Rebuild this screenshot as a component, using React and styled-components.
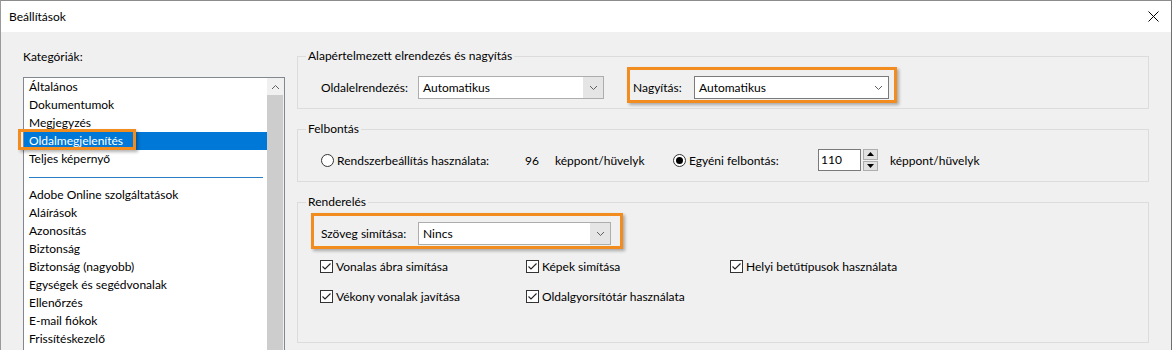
import React from "react";
import styled, { createGlobalStyle } from "styled-components";

const GlobalStyle = createGlobalStyle`
  html, body {
    margin: 0;
    padding: 0;
    background: #ffffff;
  }
  body {
    font-family: "Segoe UI", Lato, "Noto Sans", sans-serif;
    font-size: 12px;
    color: #000000;
  }
`;

const Window = styled.div`
  width: 1172px;
  height: 350px;
  box-sizing: border-box;
  border-top: 1px solid #8c8c8c;
  border-left: 1px solid #9a9a9a;
  border-right: 1px solid #6f6f6f;
  background: #f0f0f0;
  display: flex;
  flex-direction: column;
  overflow: hidden;
`;

const TitleBar = styled.div`
  height: 31px;
  flex: none;
  background: #ffffff;
  display: flex;
  align-items: center;
  justify-content: space-between;
  padding: 0 12px 0 8px;
`;

const Body = styled.div`
  flex: 1;
  display: flex;
  min-height: 0;
`;

const LeftPane = styled.div`
  width: 262px;
  padding: 17px 0 0 22px;
  flex: none;
`;

const PaneLabel = styled.div`
  line-height: 16px;
  margin-bottom: 12px;
`;

const ListBox = styled.div`
  width: 262px;
  height: 290px;
  box-sizing: border-box;
  border: 1px solid #828790;
  background: #ffffff;
  display: flex;
`;

const Items = styled.div`
  flex: 1;
`;

const Item = styled.div`
  height: 18px;
  line-height: 18px;
  padding-left: 5px;
  white-space: nowrap;
  background: ${(p) => (p.$selected ? "#0078d7" : "transparent")};
  color: ${(p) => (p.$selected ? "#ffffff" : "#000000")};
`;

const Marked = styled.span`
  position: relative;
  &::before {
    content: "";
    position: absolute;
    left: -11px;
    right: -13px;
    top: -4px;
    bottom: -2px;
    border: 3px solid #f28c1f;
    box-shadow: 2px 2px 3px rgba(0, 0, 0, 0.3);
  }
`;

const Separator = styled.div`
  height: 18px;
  display: flex;
  align-items: center;
  padding: 0 4px 0 5px;
  &::after {
    content: "";
    flex: 1;
    height: 1px;
    background: #2a7fc4;
  }
`;

const ScrollBar = styled.div`
  width: 17px;
  flex: none;
  background: #f0f0f0;
  display: flex;
  flex-direction: column;
`;

const ScrollArrow = styled.div`
  height: 17px;
  display: flex;
  align-items: center;
  justify-content: center;
`;

const ScrollThumb = styled.div`
  flex: 1;
  margin: 0 1px 0 0;
  background: #cdcdcd;
`;

const RightPane = styled.div`
  width: 852px;
  margin-left: 12px;
  padding-top: 24px;
  display: flex;
  flex-direction: column;
  gap: 20px;
`;

const Group = styled.div`
  position: relative;
  height: ${(p) => p.$h}px;
  box-sizing: border-box;
  border: 1px solid #dcdcdc;
  padding: 19px 0 0 23px;
`;

const Caption = styled.span`
  position: absolute;
  top: -9px;
  left: 8px;
  padding: 0 2px;
  line-height: 16px;
  background: #f0f0f0;
`;

const Row = styled.div`
  display: flex;
  align-items: center;
`;

const FieldLabel = styled.span`
  width: ${(p) => p.$w}px;
  flex: none;
  white-space: nowrap;
`;

const ComboBox = styled.div`
  width: ${(p) => p.$w}px;
  height: 23px;
  box-sizing: border-box;
  border: 1px solid ${(p) => (p.$button ? "#adadad" : "#7a7a7a")};
  background: #ffffff;
  display: flex;
  align-items: stretch;
  flex: none;
`;

const ComboText = styled.span`
  flex: 1;
  padding-left: 4px;
  line-height: 21px;
`;

const ComboButton = styled.span`
  width: 20px;
  display: flex;
  align-items: center;
  justify-content: center;
  background: ${(p) => (p.$button ? "#e5e5e5" : "#ffffff")};
`;

const Highlight = styled.div`
  display: flex;
  align-items: center;
  flex: none;
  border: 3px solid #f28c1f;
  box-shadow: 2px 2px 3px rgba(0, 0, 0, 0.3);
  margin: -9px 0 -4px ${(p) => p.$ml}px;
  padding: 6px ${(p) => p.$pr}px 1px ${(p) => p.$pl}px;
`;

const ResolutionRow = styled.div`
  display: grid;
  grid-template-columns: 204px 30px 118px 145px 72px auto;
  align-items: center;
  height: 22px;
`;

const Option = styled.label`
  display: inline-flex;
  align-items: center;
  gap: 3px;
  white-space: nowrap;
`;

const Spin = styled.div`
  display: flex;
  gap: 2px;
`;

const SpinInput = styled.div`
  width: 43px;
  height: 22px;
  box-sizing: border-box;
  border: 1px solid #7a7a7a;
  background: #ffffff;
  padding-left: 2px;
  line-height: 19px;
`;

const SpinButtons = styled.div`
  width: 15px;
  display: flex;
  flex-direction: column;
  gap: 1px;
`;

const SpinButton = styled.div`
  flex: 1;
  background: #e1e1e1;
  border: 1px solid #adadad;
  display: flex;
  align-items: center;
  justify-content: center;
`;

const CheckGrid = styled.div`
  display: grid;
  grid-template-columns: 206px 204px auto;
  grid-auto-rows: 18px;
  row-gap: 12px;
  margin: 12px 0 0 -1px;
`;

const Check = styled.label`
  display: inline-flex;
  align-items: center;
  gap: 3px;
  white-space: nowrap;
  grid-column: ${(p) => p.$col};
`;

const Chevron = ({ up }) => (
  <svg width="9" height="6" viewBox="0 0 9 6">
    <polyline
      points={up ? "1,5 4.5,1.5 8,5" : "1,1 4.5,4.5 8,1"}
      fill="none"
      stroke="#606060"
      strokeWidth="1"
    />
  </svg>
);

const CloseIcon = () => (
  <svg width="11" height="11" viewBox="0 0 11 11">
    <path d="M0.5 0.5 L10.5 10.5 M10.5 0.5 L0.5 10.5" stroke="#000" strokeWidth="1" />
  </svg>
);

const Radio = ({ checked }) => (
  <svg width="13" height="13" viewBox="0 0 13 13">
    <circle cx="6.5" cy="6.5" r="6" fill="#fff" stroke="#333" strokeWidth="1" />
    {checked && <circle cx="6.5" cy="6.5" r="3.5" fill="#000" />}
  </svg>
);

const CheckBox = () => (
  <svg width="13" height="13" viewBox="0 0 13 13">
    <rect x="0.5" y="0.5" width="12" height="12" fill="#fff" stroke="#333" />
    <polyline points="2.5,6.5 5,9 10.5,3.5" fill="none" stroke="#222" strokeWidth="1.1" />
  </svg>
);

const Triangle = ({ up }) => (
  <svg width="7" height="4" viewBox="0 0 7 4">
    <polygon points={up ? "0,4 3.5,0 7,4" : "0,0 3.5,4 7,0"} fill="#000" />
  </svg>
);

const topItems = ["Általános", "Dokumentumok", "Megjegyzés"];
const otherItems = [
  "Adobe Online szolgáltatások",
  "Aláírások",
  "Azonosítás",
  "Biztonság",
  "Biztonság (nagyobb)",
  "Egységek és segédvonalak",
  "Ellenőrzés",
  "E-mail fiókok",
  "Frissítéskezelő",
];

const Combo = ({ w, value, button }) => (
  <ComboBox $w={w} $button={button}>
    <ComboText>{value}</ComboText>
    <ComboButton $button={button}>
      <Chevron />
    </ComboButton>
  </ComboBox>
);

export default function App() {
  return (
    <>
      <GlobalStyle />
      <Window>
        <TitleBar>
          <span>Beállítások</span>
          <CloseIcon />
        </TitleBar>
        <Body>
          <LeftPane>
            <PaneLabel>Kategóriák:</PaneLabel>
            <ListBox>
              <Items>
                {topItems.map((t) => (
                  <Item key={t}>{t}</Item>
                ))}
                <Item $selected>
                  <Marked>Oldalmegjelenítés</Marked>
                </Item>
                <Item>Teljes képernyő</Item>
                <Separator />
                {otherItems.map((t) => (
                  <Item key={t}>{t}</Item>
                ))}
              </Items>
              <ScrollBar>
                <ScrollArrow>
                  <Chevron up />
                </ScrollArrow>
                <ScrollThumb />
              </ScrollBar>
            </ListBox>
          </LeftPane>

          <RightPane>
            <Group $h={53}>
              <Caption>Alapértelmezett elrendezés és nagyítás</Caption>
              <Row>
                <FieldLabel $w={97}>Oldalelrendezés:</FieldLabel>
                <Combo w={186} value="Automatikus" button />
                <Highlight $ml={23} $pl={3} $pr={5}>
                  <FieldLabel $w={61}>Nagyítás:</FieldLabel>
                  <Combo w={195} value="Automatikus" />
                </Highlight>
              </Row>
            </Group>

            <Group $h={53}>
              <Caption>Felbontás</Caption>
              <ResolutionRow>
                <Option>
                  <Radio />
                  Rendszerbeállítás használata:
                </Option>
                <span>96</span>
                <span>képpont/hüvelyk</span>
                <Option>
                  <Radio checked />
                  Egyéni felbontás:
                </Option>
                <Spin>
                  <SpinInput>110</SpinInput>
                  <SpinButtons>
                    <SpinButton>
                      <Triangle up />
                    </SpinButton>
                    <SpinButton>
                      <Triangle />
                    </SpinButton>
                  </SpinButtons>
                </Spin>
                <span>képpont/hüvelyk</span>
              </ResolutionRow>
            </Group>

            <Group $h={141}>
              <Caption>Renderelés</Caption>
              <Row>
                <Highlight $ml={-10} $pl={7} $pr={9}>
                  <FieldLabel $w={97}>Szöveg simítása:</FieldLabel>
                  <Combo w={193} value="Nincs" button />
                </Highlight>
              </Row>
              <CheckGrid>
                <Check $col={1}>
                  <CheckBox />
                  Vonalas ábra simítása
                </Check>
                <Check $col={2}>
                  <CheckBox />
                  Képek simítása
                </Check>
                <Check $col={3}>
                  <CheckBox />
                  Helyi betűtípusok használata
                </Check>
                <Check $col={1}>
                  <CheckBox />
                  Vékony vonalak javítása
                </Check>
                <Check $col={2}>
                  <CheckBox />
                  Oldalgyorsítótár használata
                </Check>
              </CheckGrid>
            </Group>
          </RightPane>
        </Body>
      </Window>
    </>
  );
}
